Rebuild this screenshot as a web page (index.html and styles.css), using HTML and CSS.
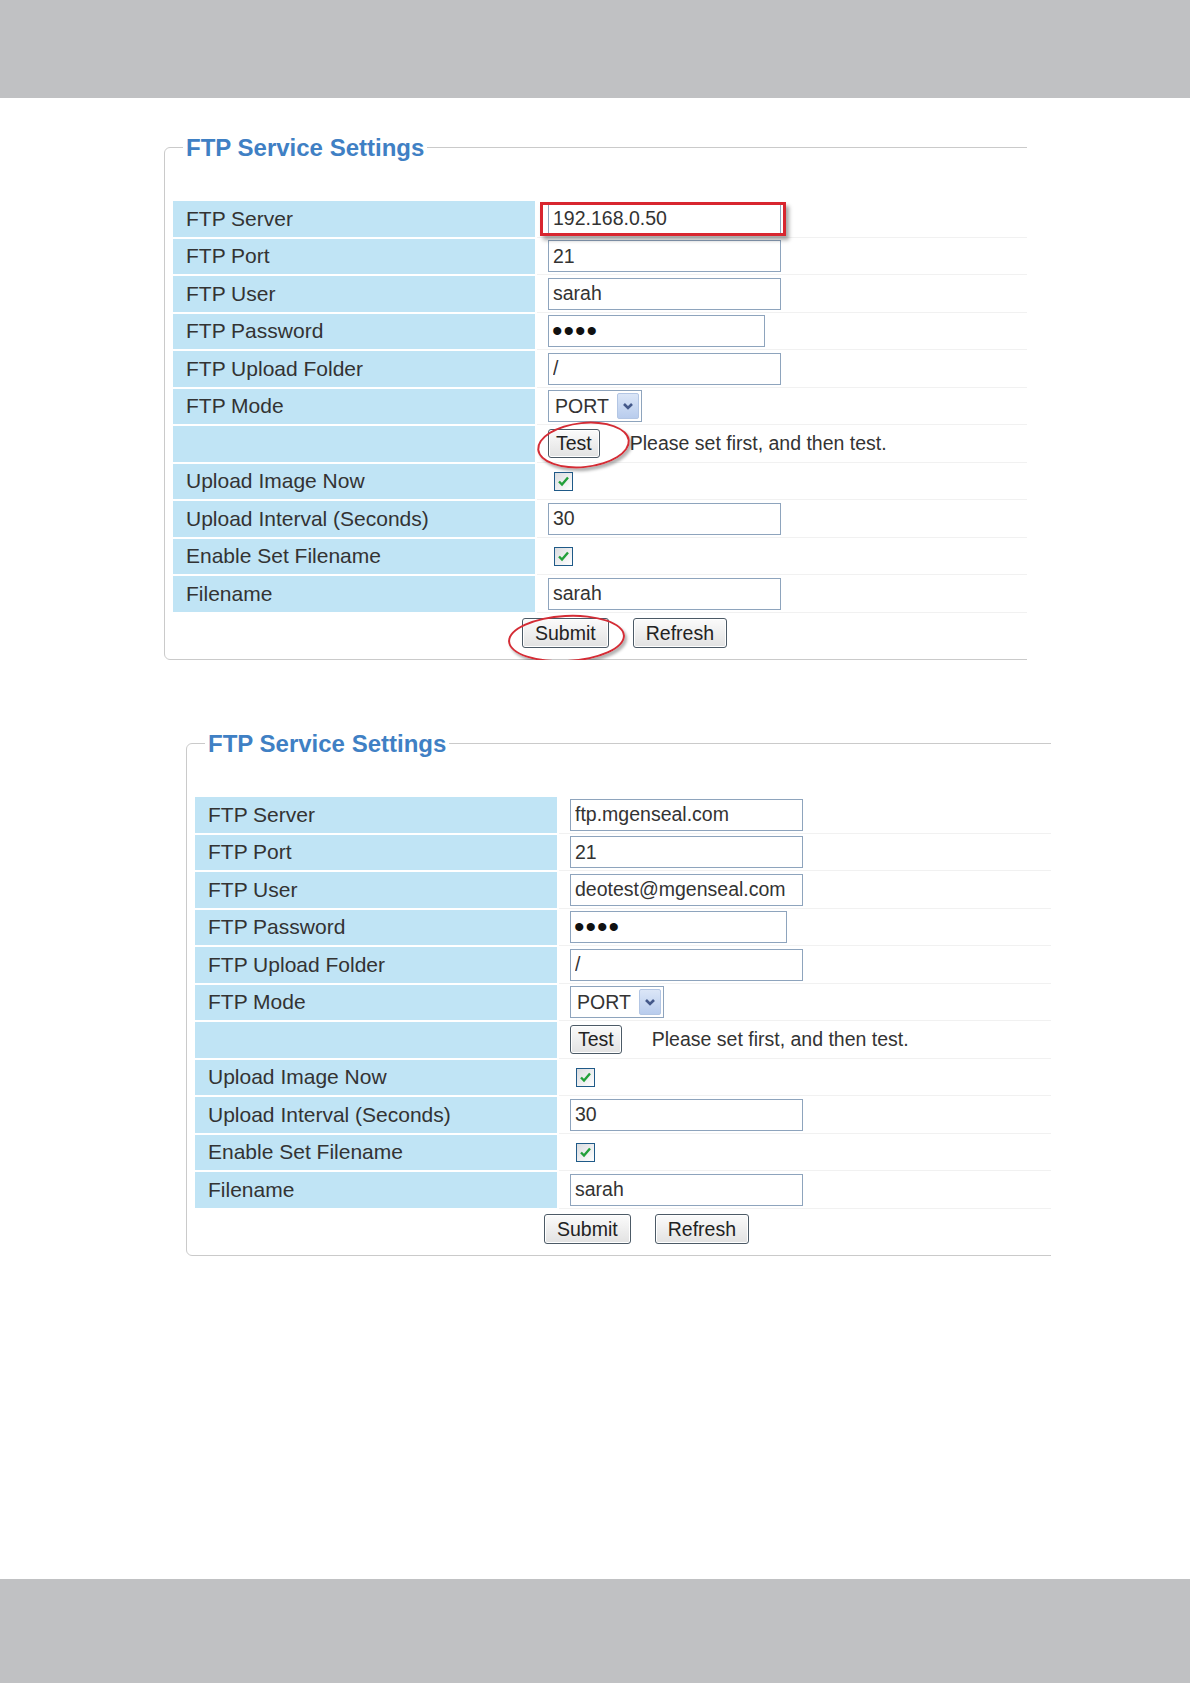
FILE: index.html
```html
<!DOCTYPE html>
<html lang="en">
<head>
<meta charset="utf-8">
<title>FTP Service Settings</title>
<link rel="stylesheet" href="styles.css">
</head>
<body>
<div class="band"></div>

<div class="clip clip-1">
  <fieldset class="panel">
    <legend>FTP Service Settings</legend>
    <div class="inner">
      <div class="grid">
        <div class="lbl">FTP Server</div>
        <div class="val"><input class="txt" type="text" value="192.168.0.50"></div>
        <div class="lbl">FTP Port</div>
        <div class="val"><input class="txt" type="text" value="21"></div>
        <div class="lbl">FTP User</div>
        <div class="val"><input class="txt" type="text" value="sarah"></div>
        <div class="lbl">FTP Password</div>
        <div class="val"><input class="txt pw" type="password" value="abcd"></div>
        <div class="lbl">FTP Upload Folder</div>
        <div class="val"><input class="txt" type="text" value="/"></div>
        <div class="lbl">FTP Mode</div>
        <div class="val"><div class="sel"><span>PORT</span><span class="sel-arrow"><svg width="14" height="14" viewBox="0 0 14 14"><polyline points="3,5 7,9 11,5" fill="none" stroke="#44598a" stroke-width="2.6"/></svg></span></div></div>
        <div class="lbl"></div>
        <div class="val"><button class="btn btn-test" type="button">Test</button><span class="hint">Please set first, and then test.</span></div>
        <div class="lbl">Upload Image Now</div>
        <div class="val"><span class="cb"><svg width="15" height="15" viewBox="0 0 15 15"><polyline points="3,7.5 6,10.5 12,3.5" fill="none" stroke="#22a03a" stroke-width="2.4"/></svg></span></div>
        <div class="lbl">Upload Interval (Seconds)</div>
        <div class="val"><input class="txt" type="text" value="30"></div>
        <div class="lbl">Enable Set Filename</div>
        <div class="val"><span class="cb"><svg width="15" height="15" viewBox="0 0 15 15"><polyline points="3,7.5 6,10.5 12,3.5" fill="none" stroke="#22a03a" stroke-width="2.4"/></svg></span></div>
        <div class="lbl">Filename</div>
        <div class="val"><input class="txt" type="text" value="sarah"></div>
      </div>
      <div class="actions">
        <button class="btn" type="button">Submit</button>
        <button class="btn" type="button">Refresh</button>
      </div>
      <span class="mark mark-rect"></span>
      <span class="mark ring ring-test"></span>
      <span class="mark ring ring-submit"></span>
    </div>
  </fieldset>
</div>

<div class="clip clip-2">
  <fieldset class="panel">
    <legend>FTP Service Settings</legend>
    <div class="inner">
      <div class="grid">
        <div class="lbl">FTP Server</div>
        <div class="val"><input class="txt" type="text" value="ftp.mgenseal.com"></div>
        <div class="lbl">FTP Port</div>
        <div class="val"><input class="txt" type="text" value="21"></div>
        <div class="lbl">FTP User</div>
        <div class="val"><input class="txt" type="text" value="deotest@mgenseal.com"></div>
        <div class="lbl">FTP Password</div>
        <div class="val"><input class="txt pw" type="password" value="abcd"></div>
        <div class="lbl">FTP Upload Folder</div>
        <div class="val"><input class="txt" type="text" value="/"></div>
        <div class="lbl">FTP Mode</div>
        <div class="val"><div class="sel"><span>PORT</span><span class="sel-arrow"><svg width="14" height="14" viewBox="0 0 14 14"><polyline points="3,5 7,9 11,5" fill="none" stroke="#44598a" stroke-width="2.6"/></svg></span></div></div>
        <div class="lbl"></div>
        <div class="val"><button class="btn btn-test" type="button">Test</button><span class="hint">Please set first, and then test.</span></div>
        <div class="lbl">Upload Image Now</div>
        <div class="val"><span class="cb"><svg width="15" height="15" viewBox="0 0 15 15"><polyline points="3,7.5 6,10.5 12,3.5" fill="none" stroke="#22a03a" stroke-width="2.4"/></svg></span></div>
        <div class="lbl">Upload Interval (Seconds)</div>
        <div class="val"><input class="txt" type="text" value="30"></div>
        <div class="lbl">Enable Set Filename</div>
        <div class="val"><span class="cb"><svg width="15" height="15" viewBox="0 0 15 15"><polyline points="3,7.5 6,10.5 12,3.5" fill="none" stroke="#22a03a" stroke-width="2.4"/></svg></span></div>
        <div class="lbl">Filename</div>
        <div class="val"><input class="txt" type="text" value="sarah"></div>
      </div>
      <div class="actions">
        <button class="btn" type="button">Submit</button>
        <button class="btn" type="button">Refresh</button>
      </div>
    </div>
  </fieldset>
</div>

<div class="band band-bottom"></div>
</body>
</html>
```

FILE: styles.css
```css
html, body {
  margin: 0;
  padding: 0;
}

body {
  font-family: "Liberation Sans", Arial, sans-serif;
  background: #ffffff;
  color: #333333;
  display: flex;
  flex-direction: column;
  min-height: 1683px;
  width: 1190px;
}

.band {
  flex: none;
  height: 98px;
  background: #c0c1c3;
}

.band-bottom {
  margin-top: auto;
  height: 104px;
}

.clip {
  overflow: hidden;
  flex: none;
}

.clip-1 {
  margin: 36px 0 0 164px;
  width: 863px;
}

.clip-2 {
  margin: 70px 0 0 186px;
  width: 865px;
}

.panel {
  margin: 0;
  min-width: 0;
  width: 1000px;
  box-sizing: border-box;
  border: 1px solid #cacaca;
  border-radius: 6px;
  padding: 6px 0 4px 8px;
}

.panel legend {
  margin-left: 10px;
  padding: 0 3px;
  font-size: 24px;
  line-height: 27px;
  font-weight: bold;
  color: #3f80c4;
}

.inner {
  position: relative;
  width: 900px;
  padding-top: 34px;
}

.grid {
  display: grid;
  grid-template-columns: 362px 1fr;
  grid-auto-rows: 35.5px;
  row-gap: 2px;
  column-gap: 2px;
}

.lbl {
  background: #c0e4f5;
  padding-left: 13px;
  display: flex;
  align-items: center;
  font-size: 21px;
  color: #333333;
}

.val {
  display: flex;
  align-items: center;
  padding-left: 11px;
  background: #ffffff;
  box-shadow: 0 1px 0 #f1f1f1;
}

.txt {
  box-sizing: border-box;
  width: 233px;
  height: 32px;
  margin: 0;
  padding: 0 4px;
  border: 1px solid #8ea4bd;
  background: #ffffff;
  font-family: "Liberation Sans", Arial, sans-serif;
  font-size: 19.5px;
  color: #333333;
  outline: none;
}

.pw {
  width: 217px;
  font-size: 30px;
  letter-spacing: 1px;
  color: #111111;
  padding-left: 3px;
}

.sel {
  box-sizing: border-box;
  width: 94px;
  height: 32px;
  border: 1px solid #8ea4bd;
  background: #ffffff;
  display: flex;
  align-items: center;
  padding-left: 6px;
  font-size: 19.5px;
  color: #333333;
}

.sel-arrow {
  margin-left: auto;
  margin-right: 2px;
  width: 22px;
  height: 26px;
  box-sizing: border-box;
  border: 1px solid #b3c6e4;
  border-radius: 2px;
  background: linear-gradient(#dbe6f7, #b8cced);
  display: flex;
  align-items: center;
  justify-content: center;
}

.btn {
  box-sizing: border-box;
  height: 30px;
  margin: 0;
  padding: 0 12px;
  border: 1px solid #4c5a66;
  border-radius: 3px;
  background: linear-gradient(#fbfbfb, #e2e2e2);
  box-shadow: inset 0 0 0 1px #ffffff;
  font-family: "Liberation Sans", Arial, sans-serif;
  font-size: 19.5px;
  color: #222222;
}

.btn-test {
  height: 29px;
  padding: 0 7px;
}

.hint {
  margin-left: 30px;
  font-size: 19.5px;
  color: #333333;
}

.cb {
  box-sizing: border-box;
  width: 19px;
  height: 19px;
  margin-left: 6px;
  border: 1px solid #1f5a88;
  background: linear-gradient(135deg, #dadcdf, #ffffff);
  display: flex;
  align-items: center;
  justify-content: center;
}

.actions {
  display: flex;
  gap: 24px;
  padding: 6.5px 0 7px 349px;
}

.mark {
  position: absolute;
  box-sizing: border-box;
  pointer-events: none;
}

.mark-rect {
  left: 367px;
  top: 35px;
  width: 246px;
  height: 34px;
  border: 3px solid #d8262f;
  box-shadow: 3px 4px 4px rgba(0, 0, 0, 0.35);
}

.ring {
  border: 2.5px solid #d42c35;
  border-radius: 50%;
  box-shadow: 2px 3px 3px rgba(0, 0, 0, 0.3);
}

.ring-test {
  left: 364px;
  top: 255px;
  width: 93px;
  height: 46px;
  transform: rotate(-6deg);
}

.ring-submit {
  left: 335px;
  top: 448px;
  width: 117px;
  height: 47px;
  transform: rotate(-3deg);
}
```
